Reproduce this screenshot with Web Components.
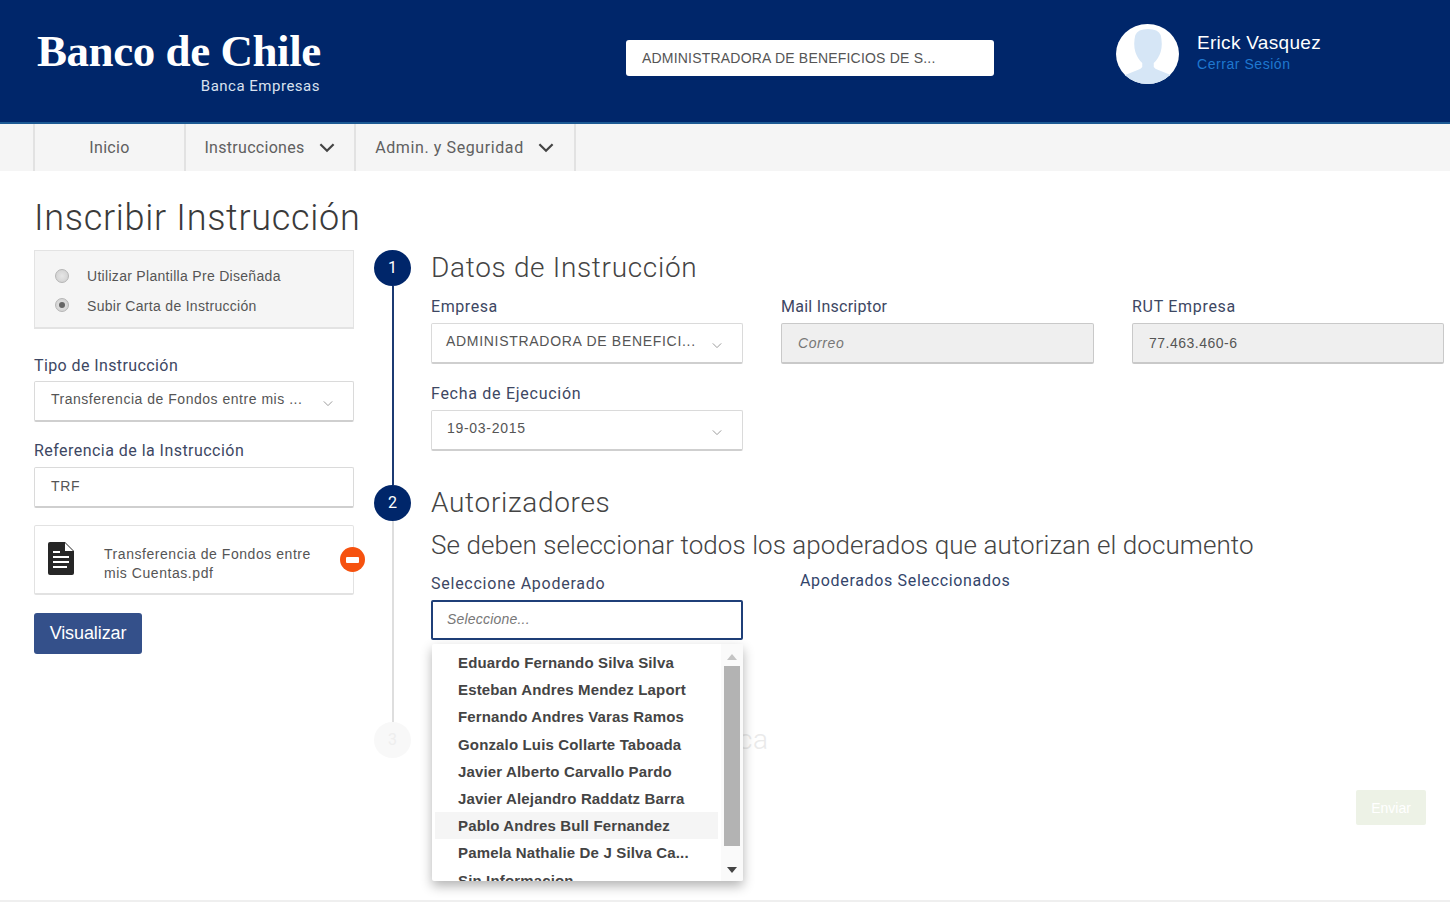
<!DOCTYPE html>
<html lang="es">
<head>
<meta charset="utf-8">
<title>Inscribir Instrucción</title>
<style>
  html, body { margin: 0; height: 902px; overflow: hidden; background: #fff; }
  body { display: flex; flex-direction: column; font-family: "Liberation Sans", Arial, sans-serif; color: #555; }
  bc-page { flex: 1; }
  .two { display: flex; gap: 57px; }
  .three { display: grid; grid-template-columns: 312px 313px 312px; column-gap: 38px; row-gap: 20px; }
</style>
</head>
<body>
<bc-header></bc-header>
<bc-nav></bc-nav>
<bc-page heading="Inscribir Instrucción">
  <bc-left slot="left"></bc-left>
  <div slot="right">
    <bc-step num="1" heading="Datos de Instrucción" height="235" line="#1c3a73">
      <div class="three">
        <bc-field label="Empresa" value="ADMINISTRADORA DE BENEFICI..." kind="select" style="--lt:.57px;--vt:.7px;--pad:14px"></bc-field>
        <bc-field label="Mail Inscriptor" value="Correo" kind="readonly hint" style="--lt:.27px;--vt:.6px"></bc-field>
        <bc-field label="RUT Empresa" value="77.463.460-6" kind="readonly" style="--lt:.7px;--vt:.5px"></bc-field>
        <bc-field label="Fecha de Ejecución" value="19-03-2015" kind="select" style="--lt:.72px;--vt:.7px"></bc-field>
      </div>
    </bc-step>
    <bc-step num="2" heading="Autorizadores" sub="Se deben seleccionar todos los apoderados que autorizan el documento" height="237" line="#dedede">
      <div class="two">
        <bc-apoderado></bc-apoderado>
        <bc-selected>Apoderados Seleccionados</bc-selected>
      </div>
    </bc-step>
    <bc-step num="3" heading="ca" height="122" faded>
      <bc-send>Enviar</bc-send>
    </bc-step>
  </div>
</bc-page>
<bc-footer></bc-footer>

<script>
// small helper so every element gets its open shadow root the same way
function shadow(el, html) {
  const t = document.createElement('template');
  t.innerHTML = html;
  el.attachShadow({ mode: 'open' }).appendChild(t.content.cloneNode(true));
}
const chevron = (w, col, sw) => `<svg width="${w}" height="${Math.round(w * .62)}" viewBox="0 0 16 10" fill="none"><path d="M2 2l6 6 6-6" stroke="${col}" stroke-width="${sw}"/></svg>`;

class BcHeader extends HTMLElement {
  constructor() {
    super();
    shadow(this, `
      <style>
        :host { display: flex; flex: none; align-items: flex-start; box-sizing: border-box; height: 124px; background: #00266a; border-bottom: 2px solid #1d5a94; padding-left: 36px; }
        .logo { width: 284px; margin-right: 306px; padding-top: 22px; display: flex; flex-direction: column; align-items: flex-end; color: #fff; }
        .name { font: bold 45px/58px "Liberation Serif", serif; letter-spacing: -.45px; white-space: nowrap; align-self: flex-start; padding-left: 1px; }
        .sub { font: 15px/18px Roboto, sans-serif; color: #d9e1ef; margin-top: -3px; letter-spacing: .5px; }
        .search { box-sizing: border-box; width: 368px; height: 36px; margin-top: 40px; background: #fff; border-radius: 3px; padding: 0 16px; font: 14px/36px "Liberation Sans", sans-serif; letter-spacing: .2px; color: #555; white-space: nowrap; }
        .avatar { margin: 24px 0 0 122px; width: 63px; height: 60px; }
        .user { margin: 31px 0 0 18px; }
        .who { font: 19px/24px "Liberation Sans", sans-serif; color: #fff; letter-spacing: .3px; }
        .out { font: 14px/16px "Liberation Sans", sans-serif; color: #1f78d0; margin-top: 1px; letter-spacing: .55px; }
      </style>
      <div class="logo"><div class="name">Banco de Chile</div><div class="sub">Banca Empresas</div></div>
      <div class="search">ADMINISTRADORA DE BENEFICIOS DE S...</div>
      <svg class="avatar" viewBox="0 0 63 60">
        <defs><clipPath id="c"><ellipse cx="31.5" cy="30" rx="31.5" ry="30"/></clipPath></defs>
        <ellipse cx="31.5" cy="30" rx="31.5" ry="30" fill="#fff"/>
        <g clip-path="url(#c)" fill="#d6e6f6">
          <path transform="translate(-4.8 0) scale(1.15 1)" d="M21 11q2-6 11-6t11 6q2 9 0 17-2 7-6 11v4q1 2 4 3l13 6v10H10V52l13-6q3-1 4-3v-4q-4-4-6-11-2-8 0-17z"/>
        </g>
      </svg>
      <div class="user"><div class="who">Erick Vasquez</div><div class="out">Cerrar Sesión</div></div>
    `);
  }
}

class BcNav extends HTMLElement {
  constructor() {
    super();
    const arrow = chevron(18, '#444', 2);
    shadow(this, `
      <style>
        :host { display: flex; flex: none; height: 47px; background: #f5f5f5; padding-left: 33px; font: 16px/46px Roboto, sans-serif; color: #606060; }
        .i { box-sizing: border-box; border-left: 2px solid #e2e2e2; display: flex; align-items: center; justify-content: center; gap: 13px; }
        .i:last-child { border-right: 2px solid #e2e2e2; }
      </style>
      <div class="i" style="width:151px;letter-spacing:.3px">Inicio</div>
      <div class="i" style="width:170px;letter-spacing:.3px">Instrucciones ${arrow}</div>
      <div class="i" style="width:222px;letter-spacing:.6px">Admin. y Seguridad ${arrow}</div>
    `);
  }
}

class BcPage extends HTMLElement {
  constructor() {
    super();
    shadow(this, `
      <style>
        :host { display: block; padding: 24px 0 0 34px; }
        h1 { margin: 0 0 9px; font: 300 36px/46px Roboto, sans-serif; letter-spacing: .7px; color: #3a3a3a; }
        .cols { display: flex; gap: 19px; }
        .l { width: 320px; flex: none; }
        .r { flex: 1; }
      </style>
      <h1></h1>
      <div class="cols"><div class="l"><slot name="left"></slot></div><div class="r"><slot name="right"></slot></div></div>
    `);
    this.shadowRoot.querySelector('h1').textContent = this.getAttribute('heading');
  }
}

// label + boxed value, kind: select, readonly, input, focus, hint
class BcField extends HTMLElement {
  constructor() {
    super();
    const kind = this.getAttribute('kind') || 'input';
    shadow(this, `
      <style>
        :host { display: block; }
        label { display: block; font: 16px/20px Roboto, sans-serif; letter-spacing: var(--lt, .4px); color: #3d4763; margin-bottom: var(--gap, 6px); white-space: nowrap; }
        .box { box-sizing: border-box; height: var(--h, 41px); display: flex; align-items: center; gap: 10px; padding: 0 19px 4px var(--pad, 15px); background: #fff; border: 1px solid #dadada; border-bottom: 2px solid #cfcfcf; border-radius: 2px; font: 14px/20px "Liberation Sans", sans-serif; letter-spacing: var(--vt, 0); color: #555; }
        .v { flex: 1; min-width: 0; white-space: nowrap; }
        svg { flex: none; margin-top: 8px; }
        .input { padding-bottom: 2px; }
        .readonly { background: #efefef; border-color: #c9c9c9; padding: 0 16px 0 var(--pad, 16px); }
        .hint .v { font-style: italic; color: #777; }
        .focus { border: 2px solid #1f3f78; padding: 0 14px 2px; }
        .focus .v { font-style: italic; color: #777; }
      </style>
      <label></label>
      <div class="box ${kind}"><span class="v"></span>${kind === 'select' ? chevron(12, '#999', 1.4) : ''}</div>
    `);
    this.shadowRoot.querySelector('label').textContent = this.getAttribute('label');
    this.shadowRoot.querySelector('.v').textContent = this.getAttribute('value');
  }
}

class BcLeft extends HTMLElement {
  constructor() {
    super();
    shadow(this, `
      <style>
        :host { display: block; }
        .radios { box-sizing: border-box; height: 79px; background: #f5f5f5; border: 1px solid #e3e3e3; border-bottom-width: 2px; padding: 11px 0 0 20px; font: 14px/29.5px "Liberation Sans", sans-serif; letter-spacing: .3px; color: #555; }
        .r { display: flex; align-items: center; gap: 18px; }
        .dot { width: 14px; height: 14px; border-radius: 50%; box-sizing: border-box; border: 1px solid #b5b5b5; background: radial-gradient(#e6e6e6, #cdcdcd); display: flex; align-items: center; justify-content: center; margin-top: -2px; }
        .dot.on::after { content: ""; width: 6px; height: 6px; border-radius: 50%; background: #666; }
        .f1 { margin-top: 27px; }
        .f2 { margin-top: 19px; }
        bc-file { margin-top: 17px; }
        .btn { display: block; margin-top: 18px; width: 108px; height: 41px; box-sizing: border-box; background: #34508a; border-radius: 3px; color: #fff; font: 18px/41px "Liberation Sans", sans-serif; letter-spacing: -.1px; text-align: center; }
      </style>
      <div class="radios">
        <div class="r"><span class="dot"></span>Utilizar Plantilla Pre Diseñada</div>
        <div class="r"><span class="dot on"></span>Subir Carta de Instrucción</div>
      </div>
      <bc-field class="f1" label="Tipo de Instrucción" value="Transferencia de Fondos entre mis ..." kind="select" style="--gap:5px;--pad:16px;--vt:.52px"></bc-field>
      <bc-field class="f2" label="Referencia de la Instrucción" value="TRF" style="--pad:16px;--vt:.7px;--lt:.46px"></bc-field>
      <bc-file>Transferencia de Fondos entre mis Cuentas.pdf</bc-file>
      <div class="btn">Visualizar</div>
    `);
  }
}

class BcFile extends HTMLElement {
  constructor() {
    super();
    shadow(this, `
      <style>
        :host { display: block; position: relative; box-sizing: border-box; height: 70px; border: 1px solid #e2e2e2; border-bottom-width: 2px; border-radius: 2px; }
        .row { display: flex; align-items: center; height: 100%; padding-left: 13px; }
        .doc { width: 26px; height: 33px; flex: none; margin: -3px 30px 0 0; }
        .t { width: 222px; margin-top: 9px; font: 14px/19px "Liberation Sans", sans-serif; letter-spacing: .55px; color: #555; }
        .x { position: absolute; right: -12px; top: 21px; width: 25px; height: 25px; border-radius: 50%; background: #f6520f; display: flex; align-items: center; justify-content: center; }
        .x::after { content: ""; width: 13px; height: 6px; border-radius: 1px; background: #fff; }
      </style>
      <div class="row">
        <svg class="doc" viewBox="0 0 26 33">
          <path d="M2 0h15l9 9v22a2 2 0 0 1-2 2H2a2 2 0 0 1-2-2V2a2 2 0 0 1 2-2z" fill="#262626"/>
          <path d="M17 1l8 8h-8z" fill="#fff"/>
          <path d="M5 10h7M5 15h16M5 20h16M5 25h14" stroke="#fff" stroke-width="2"/>
        </svg>
        <div class="t"><slot></slot></div>
      </div>
      <div class="x"></div>
    `);
  }
}

class BcStep extends HTMLElement {
  constructor() {
    super();
    const faded = this.hasAttribute('faded');
    const line = this.getAttribute('line');
    shadow(this, `
      <style>
        :host { display: flex; gap: 19px; box-sizing: border-box; height: ${this.getAttribute('height')}px; }
        .rail { width: 39px; flex: none; display: flex; flex-direction: column; align-items: center; }
        .n { width: 37px; height: 36px; flex: none; border-radius: 50%; background: #00266a; color: #fff; font: 16px/36px Roboto, sans-serif; text-align: center; }
        .line { width: 2px; flex: 1; }
        .c { flex: 1; min-width: 0; }
        h2 { margin: 1px 0 12px; font: 300 28px/34px Roboto, sans-serif; letter-spacing: .68px; color: #444; }
        h3 { margin: -4px 0 12px; font: 300 26px/34px Roboto, sans-serif; letter-spacing: .07px; color: #444; }
        .faded .n { background: #f8f8f8; color: #eee; }
        .faded h2 { color: #eaeaea; padding-left: 307px; margin-bottom: 33px; }
      </style>
      <div class="rail ${faded ? 'faded' : ''}"><div class="n">${this.getAttribute('num')}</div><div class="line" style="background:${line || 'transparent'}"></div></div>
      <div class="c ${faded ? 'faded' : ''}">
        <h2>${this.getAttribute('heading')}</h2>
        ${this.getAttribute('sub') ? `<h3>${this.getAttribute('sub')}</h3>` : ''}
        <slot></slot>
      </div>
    `);
  }
}

class BcApoderado extends HTMLElement {
  constructor() {
    super();
    shadow(this, `
      <style>
        :host { display: block; position: relative; width: 312px; flex: none; }
      </style>
      <bc-field label="Seleccione Apoderado" value="Seleccione..." kind="focus" style="--lt:.75px;--vt:.2px;--gap:6px;--h:40px"></bc-field>
      <bc-list></bc-list>
    `);
  }
}

class BcList extends HTMLElement {
  constructor() {
    super();
    const names = ['Eduardo Fernando Silva Silva', 'Esteban Andres Mendez Laport', 'Fernando Andres Varas Ramos', 'Gonzalo Luis Collarte Taboada', 'Javier Alberto Carvallo Pardo', 'Javier Alejandro Raddatz Barra', 'Pablo Andres Bull Fernandez', 'Pamela Nathalie De J Silva Ca...', 'Sin Informacion'];
    shadow(this, `
      <style>
        :host { position: absolute; left: 1px; top: 70px; width: 311px; height: 237px; display: flex; background: #fff; box-shadow: 0 5px 12px rgba(0,0,0,.3); border-radius: 2px; overflow: hidden; z-index: 5; }
        .items { flex: 1; padding: 5px 3px 0; overflow: hidden; }
        .it { height: 27.2px; padding-left: 23px; font: bold 15px/27.2px "Liberation Sans", sans-serif; letter-spacing: .15px; color: #444; white-space: nowrap; }
        .it.hot { background: #f5f5f5; }
        .bar { width: 22px; flex: none; background: #fafafa; display: flex; flex-direction: column; align-items: center; }
        .thumb { width: 16px; height: 180px; background: #b3b3b3; margin: 6px 0 7px; }
        .up, .down { width: 0; height: 0; border-left: 5px solid transparent; border-right: 5px solid transparent; }
        .up { border-bottom: 6px solid #c4c4c4; margin-top: 10px; }
        .down { border-top: 6px solid #444; margin-top: 14px; }
      </style>
      <div class="items">${names.map((n, i) => `<div class="it${i === 6 ? ' hot' : ''}">${n}</div>`).join('')}</div>
      <div class="bar"><div class="up"></div><div class="thumb"></div><div class="down"></div></div>
    `);
  }
}

class BcSelected extends HTMLElement {
  constructor() {
    super();
    shadow(this, `
      <style>:host { display: block; font: 16px/20px Roboto, sans-serif; letter-spacing: .67px; color: #33456b; margin-top: -3px; white-space: nowrap; }</style>
      <slot></slot>
    `);
  }
}

class BcSend extends HTMLElement {
  constructor() {
    super();
    shadow(this, `
      <style>
        :host { display: block; box-sizing: border-box; width: 70px; height: 35px; margin: 33px 0 0 925px; background: #edf2e6; border-radius: 2px; color: #fff; font: 14px/37px "Liberation Sans", sans-serif; text-align: center; }
      </style>
      <slot></slot>
    `);
  }
}

class BcFooter extends HTMLElement {
  constructor() {
    super();
    shadow(this, `<style>:host { display: block; flex: none; height: 2px; background: #efefef; }</style>`);
  }
}

customElements.define('bc-header', BcHeader);
customElements.define('bc-nav', BcNav);
customElements.define('bc-page', BcPage);
customElements.define('bc-field', BcField);
customElements.define('bc-left', BcLeft);
customElements.define('bc-file', BcFile);
customElements.define('bc-step', BcStep);
customElements.define('bc-apoderado', BcApoderado);
customElements.define('bc-list', BcList);
customElements.define('bc-selected', BcSelected);
customElements.define('bc-send', BcSend);
customElements.define('bc-footer', BcFooter);
</script>
</body>
</html>
